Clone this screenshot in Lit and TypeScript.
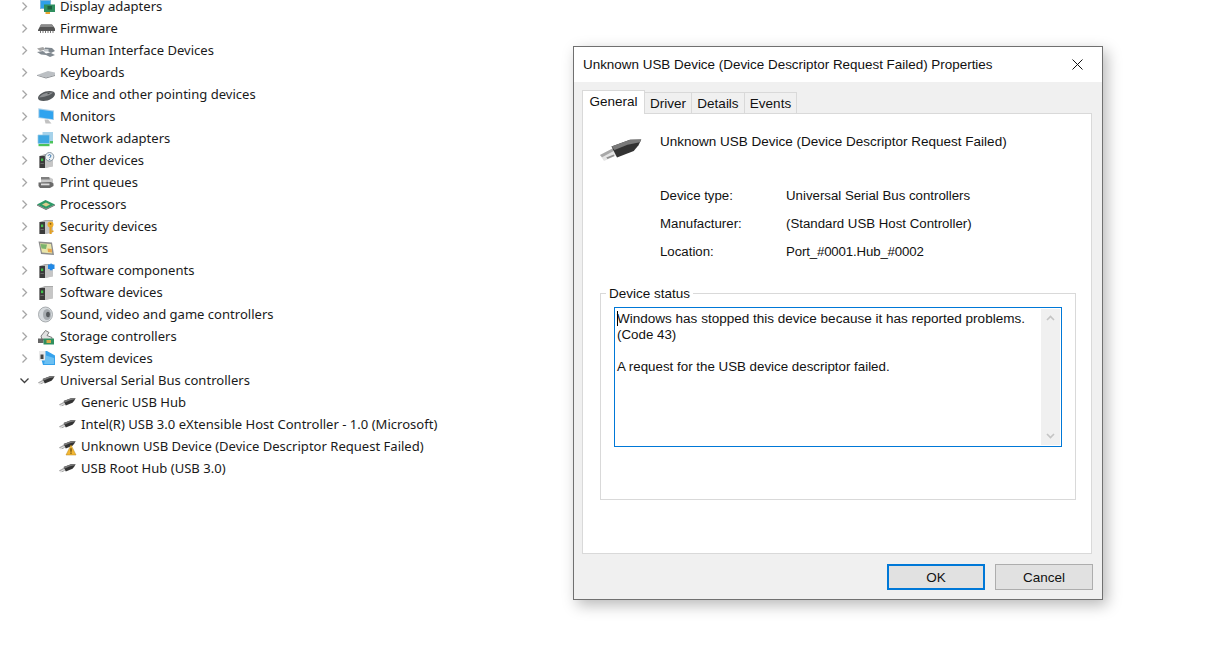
import { LitElement, html, css, svg } from "lit";
import { customElement } from "lit/decorators.js";

const tower = svg`<path d="M1.500 4 7 2h8v12l-8 2H1.500z" fill="#a9a9a9"/><path d="M7 3h8v11.500L7 16z" fill="#c6c6c6"/><path d="M1.500 4H7v12H1.500z" fill="#3b3b3b"/><path d="M3 6.500h2.200v2.600H3z" fill="#3fc04b"/><path d="M2.500 11h3.300v.8H2.500z" fill="#777"/>`;
const usb = svg`<path d="M0 10.400 5 7.800 7.200 10.300 1.600 12.800z" fill="#e4e4e4"/><path d="M0 10.400 5 7.800 5.700 8.700.8 11.300z" fill="#a8a8a8"/><path d="M2.500 11.400 5.500 10.200 5.800 10.800 3 12z" fill="#8f8f8f"/><path d="M4.600 7 12 4.300 16.500 4.200 15.400 6.500 13.500 8.800 6.800 11.400z" fill="#333"/><path d="M4.600 7 12 4.300 16.500 4.200 16 5.300 11 6.300 5.800 8.400z" fill="#7a7a7a"/>`;

const icons: Record<string, unknown> = {
  display: svg`<path d="M2 2h11v9H2z" fill="#7fb6dc"/><path d="M3 3h9v7H3z" fill="#2f9fe8"/><path d="M6 6.500h11v7.500H6z" fill="#2f8f5f"/><path d="M9.500 8h4.500v3.500H9.500z" fill="#1d5f3f"/><path d="M7.500 14H12v2H7.500z" fill="#e9a52f"/>`,
  firmware: svg`<path d="M0 10 3 4.500h11L17 8.500V11H0z" fill="#555"/><path d="M3 4.500h11l1.600 2.500H1.700z" fill="#8b8b8b"/><path d="M2 11h1v2H2zM4.500 11h1v2h-1zM7 11h1v2H7zM9.500 11h1v2h-1zM12 11h1v2h-1zM14.500 11h1v2h-1z" fill="#777"/>`,
  hid: svg`<path d="M-1 6.500 5 5 8 7.500 2 9z" fill="#a4a4a4"/><path d="M7 5.500 14 6l3 3-4 2-6-3.500z" fill="#7f878e"/><path d="M-1 10 5 9 8 11.500 12 10.500 17 13 12 15 8 13 3 12.500z" fill="#828a91"/><path d="M6 7h4.500v2.500H6z" fill="#c1c6ca"/>`,
  keyboard: svg`<path d="M-1 11 10 7 17 8.500V11L8 13.500z" fill="#bcc0c4"/><path d="M8 13.500 17 11V12L8 14.500-1 11.800V11z" fill="#8b8f93"/>`,
  mouse: svg`<path d="M0 12C0 8.500 6 5 11.500 5 15 5 17 6.300 17 8c0 3.500-6 7-11.500 7C2 15 0 14 0 12z" fill="#55595c"/><path d="M1 11.500c2-3.500 8-5.500 14-5-2 2.500-9 4.800-14 5z" fill="#8d9093"/><path d="M9 7.800 11 6.800 12 7.300 10 8.300z" fill="#3e4143"/>`,
  monitor: svg`<path d="M.3 .3 16 2.500V12L.3 10z" fill="#a8cfe9"/><path d="M1.300 1.500 15 3.500v7.700L1.300 9.200z" fill="#2fa3ef"/><path d="M6.500 11.500h3.500L13.500 15.500H7.500z" fill="#c2c2c2"/>`,
  network: svg`<path d="M4.500 2H15v9H4.500z" fill="#a6d2ea"/><path d="M0 5h11.500v8.500H0z" fill="#3ea7e2" stroke="#93c8e4" stroke-width=".7"/><path d="M.5 14h11v2.200H.5z" fill="#4cc35a"/><path d="M11.800 11H15v2.500h-3.200z" fill="#4cc35a"/>`,
  other: svg`${tower}<circle cx="11.500" cy="4.800" r="4.300" fill="#eef2f5" stroke="#7e8e9c" stroke-width=".9"/><path d="M10 3.800c.5-1.700 3.100-1.400 3 .2 0 1.100-1.400 1.100-1.400 2.100M11.600 7v1" stroke="#2b6ea8" stroke-width=".9" fill="none"/>`,
  print: svg`<path d="M3 3h8l4 2v4H3z" fill="#c9c9c9"/><path d="M3 3h8l1 2.500H3z" fill="#808080"/><path d="M.5 8.500 13 8l2.500 1.500v2.500L12 14H2l-1.500-2z" fill="#6a6a6a"/><path d="M3 9.500h8.500v1.800H3z" fill="#dcdcdc"/>`,
  cpu: svg`<path d="M-1 8.500 7.500 4 17 8.500 8 13z" fill="#2f9a68"/><path d="M4 8.500 8 6.500 12 8.500 8 10.500z" fill="#dccd8e"/><path d="M-1 8.500 8 13 17 8.500V9.500L8 14-1 9.500z" fill="#666"/>`,
  security: svg`${tower}<circle cx="12.500" cy="6.500" r="3" fill="#efad2c"/><path d="M11.500 8.500h2.200V16h-2.200z" fill="#e39f22"/><path d="M13.500 12.500h2v1.500h-2z" fill="#e39f22"/><circle cx="12.500" cy="5.800" r=".9" fill="#7a5a14"/>`,
  sensors: svg`<path d="M.5 1.500 14 2.500l2 12.500L3 14z" fill="#8c8c8c"/><path d="M2 3.200 13 4l1.300 9.500L4 12.500z" fill="#e9e5a8"/><path d="M2.500 4 9 4.500 8 9 3.500 8.500z" fill="#7bb36c"/><path d="M9.500 8.500 13.700 9 14 12.500 10 12z" fill="#e8a44a"/>`,
  components: svg`${tower}<path d="M10 5V2.500h2.200L13 1l1 1.500h2.500V7H14.500v1.200h-2.700V7H10z" fill="#2189e6"/>`,
  softdev: svg`${tower}`,
  sound: svg`<ellipse cx="7.500" cy="8.500" rx="7" ry="7.500" fill="#d6dadd" stroke="#8d9295" stroke-width=".7"/><ellipse cx="9" cy="8.500" rx="4" ry="5.600" fill="#a7acb0"/><ellipse cx="10" cy="8.500" rx="1.900" ry="2.800" fill="#55595c"/>`,
  storage: svg`<path d="M3 8 7.500 2.500l3.500 2-2 3 5 2v2H4z" fill="#e2e2e2" stroke="#707070" stroke-width=".9"/><path d="M0 10.500h5.500V15H0z" fill="#666"/><path d="M5.500 10.500h10.500V16.500H5.500z" fill="#2f8f5f"/><path d="M8.500 12h4.500v3H8.500z" fill="#d7a94a"/>`,
  system: svg`<path d="M1 1h8l8 4.500V15H5z" fill="#35a2ec"/><path d="M1 1h6.500v9.500H1z" fill="#e8e8e8"/><path d="M2.500 4.500h3V9h-3z" fill="#444"/><path d="M8 5.500 16 8v6H6z" fill="#6cc0f2"/>`,
  usb,
  warn: svg`<g transform="translate(0 -1)">${usb}</g><path d="M12 7 17 17H7z" fill="#f4b733" stroke="#b5861c" stroke-width=".5"/><path d="M11.500 10.200h1v3.600h-1zM11.500 14.500h1v1.300h-1z" fill="#3a2a00"/>`,
};

type Row = { t: string; i: string; kid?: boolean; open?: boolean };
const rows: Row[] = [
  { t: "Display adapters", i: "display" },
  { t: "Firmware", i: "firmware" },
  { t: "Human Interface Devices", i: "hid" },
  { t: "Keyboards", i: "keyboard" },
  { t: "Mice and other pointing devices", i: "mouse" },
  { t: "Monitors", i: "monitor" },
  { t: "Network adapters", i: "network" },
  { t: "Other devices", i: "other" },
  { t: "Print queues", i: "print" },
  { t: "Processors", i: "cpu" },
  { t: "Security devices", i: "security" },
  { t: "Sensors", i: "sensors" },
  { t: "Software components", i: "components" },
  { t: "Software devices", i: "softdev" },
  { t: "Sound, video and game controllers", i: "sound" },
  { t: "Storage controllers", i: "storage" },
  { t: "System devices", i: "system" },
  { t: "Universal Serial Bus controllers", i: "usb", open: true },
  { t: "Generic USB Hub", i: "usb", kid: true },
  { t: "Intel(R) USB 3.0 eXtensible Host Controller - 1.0 (Microsoft)", i: "usb", kid: true },
  { t: "Unknown USB Device (Device Descriptor Request Failed)", i: "warn", kid: true },
  { t: "USB Root Hub (USB 3.0)", i: "usb", kid: true },
];

const icon = (name: string) =>
  html`<svg class="ico" viewBox="0 0 16 16" width="16" height="16">${icons[name]}</svg>`;

@customElement("app-root")
export class AppRoot extends LitElement {
  static styles = css`
    :host {
      display: block;
      position: relative;
      width: 1216px;
      height: 670px;
      overflow: hidden;
      background: #fff;
      color: #1a1a1a;
      font-family: "Noto Sans", sans-serif;
    }
    .tree {
      display: flex;
      flex-direction: column;
      margin-top: -5px;
      padding-left: 19px;
    }
    .row {
      display: flex;
      align-items: center;
      height: 22px;
      font-size: 13.05px;
      white-space: nowrap;
    }
    .row.kid {
      padding-left: 40px;
    }
    .chev {
      width: 11px;
      height: 11px;
      margin-right: 8px;
      flex: none;
    }
    .ico {
      flex: none;
      overflow: visible;
      margin-right: 6px;
    }
    .label {
      transform: translateY(-0.5px);
    }
    .dialog {
      position: absolute;
      left: 573px;
      top: 46px;
      width: 530px;
      height: 554px;
      box-sizing: border-box;
      border: 1px solid #707070;
      background: #f0f0f0;
      box-shadow: 4px 5px 14px rgba(0, 0, 0, 0.28);
      display: flex;
      flex-direction: column;
      font-family: "Liberation Sans", sans-serif;
      font-size: 13.4px;
      color: #111;
    }
    .title {
      height: 35px;
      background: #fff;
      display: flex;
      align-items: center;
      justify-content: space-between;
      padding: 0 19px 0 9px;
      flex: none;
      font-size: 13.43px;
    }
    .close {
      width: 11px;
      height: 11px;
      display: block;
    }
    .content {
      display: flex;
      flex-direction: column;
      padding: 8px 9px 0 8px;
      flex: 1;
      min-height: 0;
    }
    .tabs {
      display: flex;
      align-items: flex-end;
      height: 24px;
      flex: none;
      position: relative;
      z-index: 1;
      margin-bottom: -1px;
      font-size: 13.5px;
    }
    .tab {
      box-sizing: border-box;
      height: 22px;
      border: 1px solid #d9d9d9;
      border-left: none;
      background: #f0f0f0;
      display: flex;
      align-items: center;
      justify-content: center;
      padding-top: 1px;
    }
    .tab.active {
      height: 24px;
      background: #fff;
      border-left: 1px solid #d9d9d9;
      border-bottom: none;
      padding: 0 0 3px;
      width: 63px;
    }
    .tab.driver {
      width: 47px;
    }
    .tab.details {
      width: 53px;
    }
    .tab.events {
      width: 52px;
    }
    .panel {
      box-sizing: border-box;
      height: 441px;
      width: 510px;
      background: #fff;
      border: 1px solid #d9d9d9;
      flex: none;
      display: flex;
      flex-direction: column;
      padding: 0 15px 0 17px;
    }
    .head {
      display: flex;
      height: 62px;
      flex: none;
    }
    .bigico {
      width: 40px;
      height: 40px;
      margin-top: 15px;
      margin-right: 20px;
      flex: none;
      overflow: visible;
    }
    .devname {
      margin-top: 20px;
      font-size: 13.5px;
    }
    .props {
      display: grid;
      grid-template-columns: 126px 1fr;
      grid-auto-rows: 28px;
      align-items: center;
      padding-left: 60px;
      margin-top: 5px;
      flex: none;
      font-size: 13.25px;
    }
    .loc {
      letter-spacing: -0.15px;
    }
    .group {
      position: relative;
      box-sizing: border-box;
      height: 207px;
      margin-top: 28px;
      border: 1px solid #d9d9d9;
      flex: none;
      padding: 13px 13px 0;
    }
    .legend {
      position: absolute;
      left: 5px;
      top: -8px;
      background: #fff;
      padding: 0 3px;
      line-height: 15px;
      font-size: 13.5px;
    }
    .box {
      box-sizing: border-box;
      height: 140px;
      width: 448px;
      border: 1px solid #0078d7;
      display: flex;
      padding: 1px;
    }
    .text {
      flex: 1;
      padding: 2px 0 0 1px;
      line-height: 16px;
      position: relative;
      font-size: 13.33px;
    }
    .text p {
      margin: 0;
    }
    .text p.first {
      font-size: 13.53px;
    }
    .caret {
      position: absolute;
      left: 1px;
      top: 2px;
      width: 1px;
      height: 15px;
      background: #000;
    }
    .scroll {
      width: 19px;
      background: #f0f0f0;
      display: flex;
      flex-direction: column;
      justify-content: space-between;
      align-items: center;
      padding: 6px 0;
      flex: none;
    }
    .scroll svg {
      width: 9px;
      height: 6px;
      display: block;
    }
    .buttons {
      display: flex;
      justify-content: flex-end;
      gap: 10px;
      padding-top: 10px;
      font-size: 13.5px;
    }
    .btn {
      box-sizing: border-box;
      width: 98px;
      height: 26px;
      background: #e1e1e1;
      border: 1px solid #adadad;
      display: flex;
      align-items: center;
      justify-content: center;
      padding-top: 1px;
    }
    .btn.def {
      border: 2px solid #0078d7;
    }
  `;

  render() {
    return html`
      <div class="tree">
        ${rows.map(
          (r) => html`<div class="row ${r.kid ? "kid" : ""}">
            ${r.kid
              ? ""
              : html`<svg class="chev" viewBox="0 0 11 11">
                  <path
                    d=${r.open ? "M1.500 3.500 5.500 7.500 9.500 3.500" : "M3.500 1.500 7.500 5.500 3.500 9.500"}
                    fill="none"
                    stroke=${r.open ? "#404040" : "#a6a6a6"}
                    stroke-width="1.300"
                  />
                </svg>`}
            ${icon(r.i)}<span class="label">${r.t}</span>
          </div>`
        )}
      </div>
      <div class="dialog">
        <div class="title">
          <span>Unknown USB Device (Device Descriptor Request Failed) Properties</span>
          <svg class="close" viewBox="0 0 11 11">
            <path d="M.5.500l10 10M10.500.500l-10 10" stroke="#111" stroke-width="1" fill="none" />
          </svg>
        </div>
        <div class="content">
          <div class="tabs">
            <div class="tab active">General</div>
            <div class="tab driver">Driver</div>
            <div class="tab details">Details</div>
            <div class="tab events">Events</div>
          </div>
          <div class="panel">
            <div class="head">
              <svg class="bigico" viewBox="0 0 16 16">${icons.usb}</svg>
              <div class="devname">Unknown USB Device (Device Descriptor Request Failed)</div>
            </div>
            <div class="props">
              <span>Device type:</span><span>Universal Serial Bus controllers</span>
              <span>Manufacturer:</span><span>(Standard USB Host Controller)</span>
              <span>Location:</span><span class="loc">Port_#0001.Hub_#0002</span>
            </div>
            <div class="group">
              <span class="legend">Device status</span>
              <div class="box">
                <div class="text">
                  <span class="caret"></span>
                  <p class="first">Windows has stopped this device because it has reported problems.</p>
                  <p>(Code 43)</p>
                  <p>&nbsp;</p>
                  <p>A request for the USB device descriptor failed.</p>
                </div>
                <div class="scroll">
                  <svg viewBox="0 0 9 6"><path d="M1 5 4.500 1.500 8 5" fill="none" stroke="#c4c4c4" stroke-width="1.600" /></svg>
                  <svg viewBox="0 0 9 6"><path d="M1 1 4.500 4.500 8 1" fill="none" stroke="#c4c4c4" stroke-width="1.600" /></svg>
                </div>
              </div>
            </div>
          </div>
          <div class="buttons">
            <div class="btn def">OK</div>
            <div class="btn">Cancel</div>
          </div>
        </div>
      </div>
    `;
  }
}
